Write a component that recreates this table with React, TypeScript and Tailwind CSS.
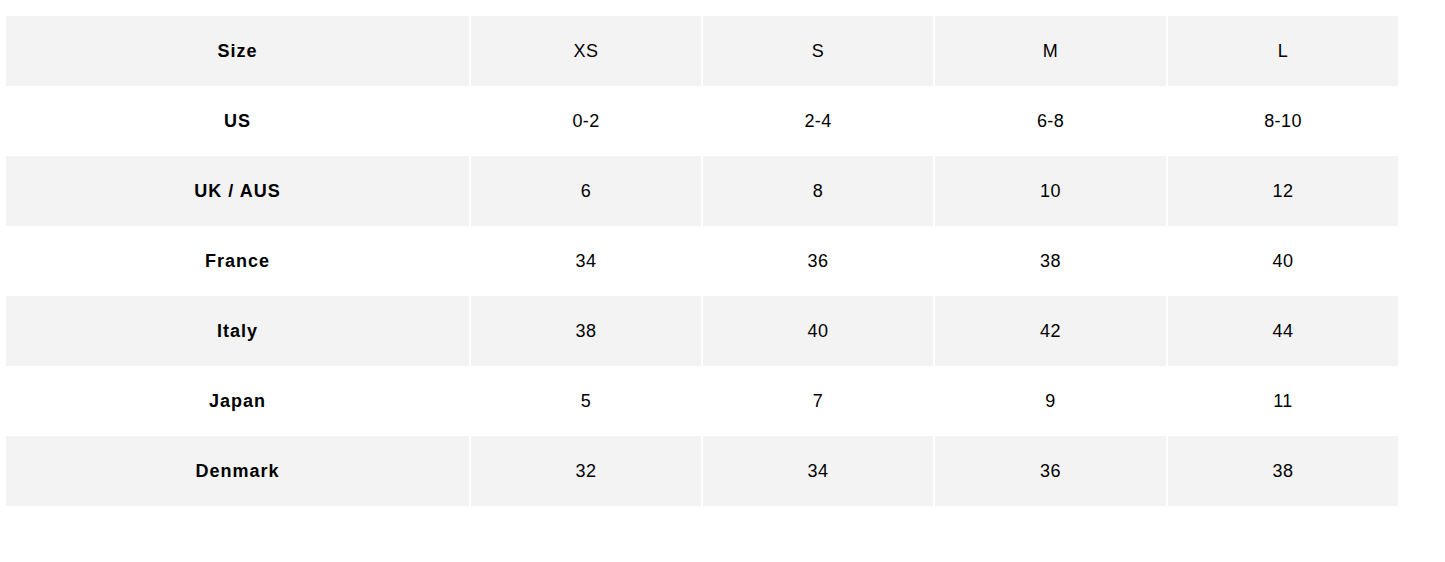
export default function App() {
  const rows: [string, string[]][] = [
    ["Size", ["XS", "S", "M", "L"]],
    ["US", ["0-2", "2-4", "6-8", "8-10"]],
    ["UK / AUS", ["6", "8", "10", "12"]],
    ["France", ["34", "36", "38", "40"]],
    ["Italy", ["38", "40", "42", "44"]],
    ["Japan", ["5", "7", "9", "11"]],
    ["Denmark", ["32", "34", "36", "38"]],
  ];
  const widths = ["w-[230px]", "w-[230px]", "w-[231px]", "w-[230px]"];
  return (
    <div className="w-[1445px] h-[562px] bg-white pt-[16px] pl-[6px]" style={{ fontFamily: '"Liberation Sans", Arial, sans-serif' }}>
      <div className="flex flex-col w-[1392px]">
        {rows.map(([label, vals], i) => (
          <div key={label} className="flex h-[70px] gap-[2px] bg-white">
            <div className={`w-[463px] flex items-center justify-center text-[18px] font-bold tracking-[1px] text-black ${i % 2 === 0 ? "bg-[#f3f3f3]" : "bg-white"}`}>{label}</div>
            {vals.map((v, j) => (
              <div key={j} className={`${widths[j]} flex items-center justify-center text-[18px] tracking-[0.4px] text-black ${i % 2 === 0 ? "bg-[#f3f3f3]" : "bg-white"}`}>{v}</div>
            ))}
          </div>
        ))}
      </div>
    </div>
  );
}
